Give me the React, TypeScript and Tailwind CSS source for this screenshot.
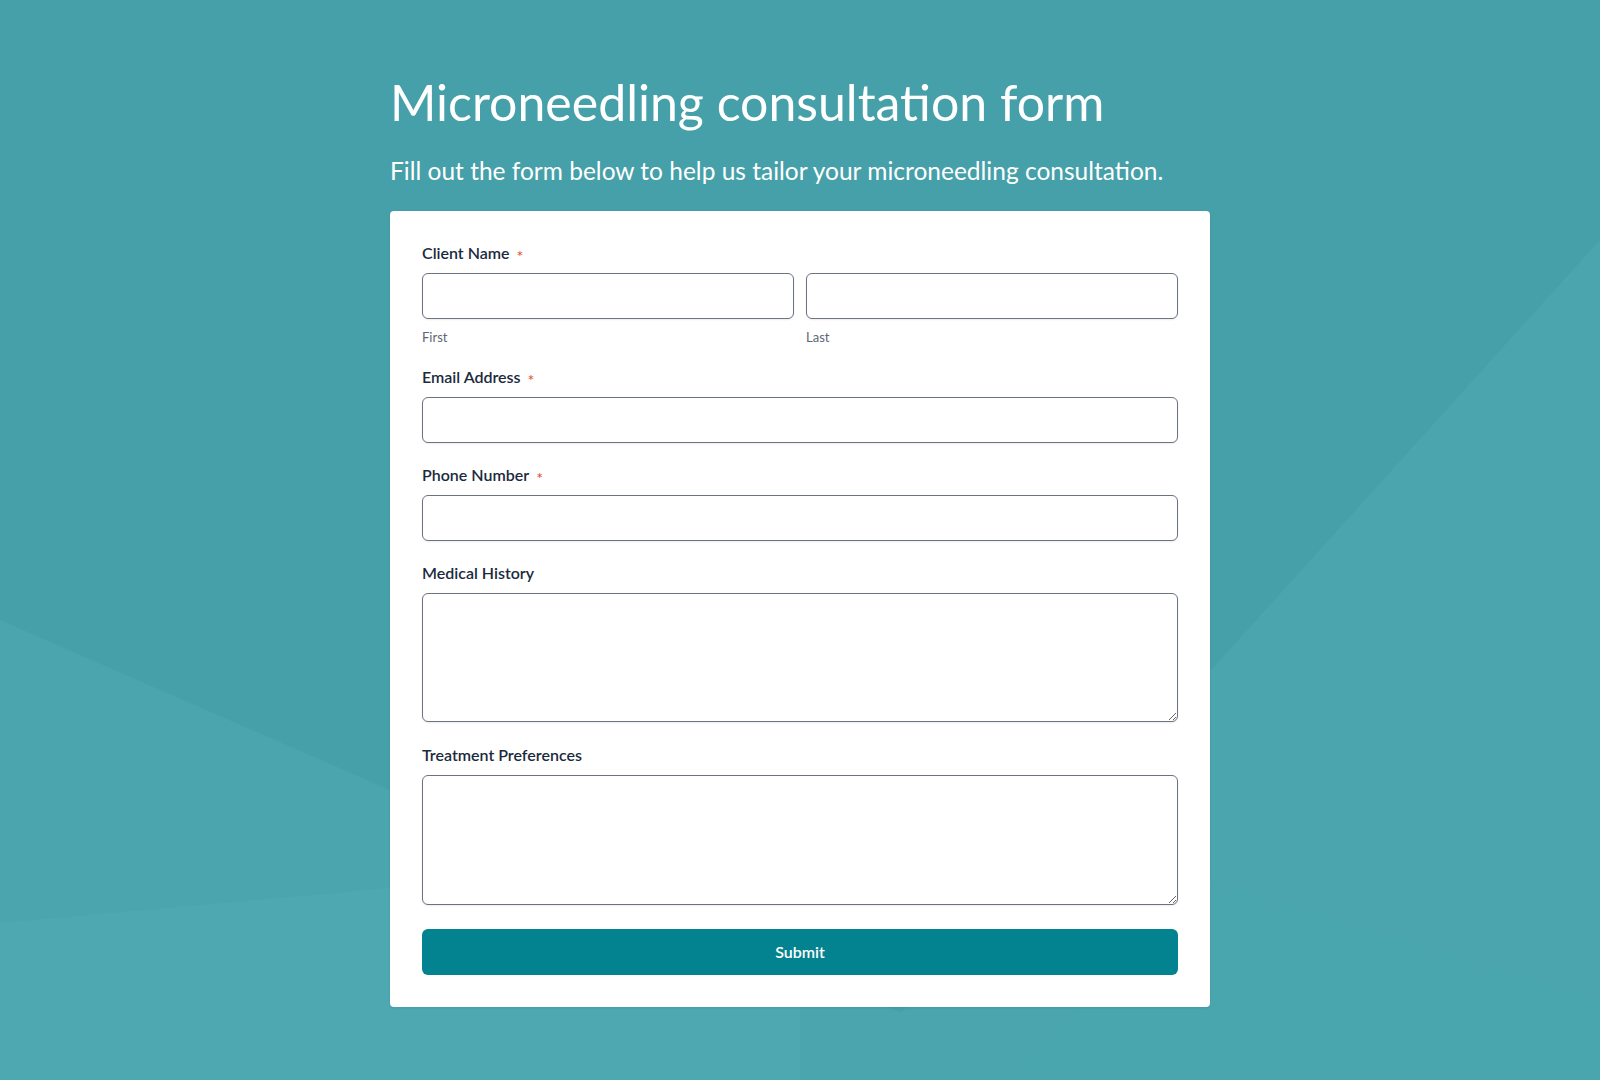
import React from 'react';

const Background = () => (
  <svg
    className="absolute inset-0 h-full w-full"
    viewBox="0 0 1600 1080"
    preserveAspectRatio="none"
    aria-hidden="true"
  >
    <rect width="1600" height="1080" fill="#46a0a9" />
    <polygon points="0,620 901,1013 1600,240 1600,1080 0,1080" fill="#4aa5ae" />
    <polygon points="0,923 390,888 800,1000 800,1080 0,1080" fill="#4da8b1" />
    <polygon points="1210,880 1600,1000 1600,1080 1000,1080" fill="#4da8b1" opacity="0.3" />
  </svg>
);

const Label = ({ text, required }: { text: string; required?: boolean }) => (
  <label className="mb-2.5 flex h-5 items-center text-base font-semibold leading-5 text-[#1b2a3d]">
    {text}
    {required && (
      <span className="relative top-[3px] ml-[7px] text-[16px] font-normal text-[#e0492f]">*</span>
    )}
  </label>
);

const inputCls =
  'block h-[46px] w-full rounded-md border border-[#6b7280] bg-white px-3 text-[15px] text-[#1b2a3d] shadow-[0_1px_2px_rgba(0,0,0,0.08)] outline-none';

const textareaCls =
  'block w-full rounded-md border border-[#6b7280] bg-white px-3 py-2 text-[15px] text-[#1b2a3d] shadow-[0_1px_2px_rgba(0,0,0,0.08)] outline-none';

export default function App() {
  return (
    <div className="relative min-h-screen w-full overflow-hidden font-['Lato','Noto_Sans',sans-serif]">
      <Background />
      <div className="relative mx-auto w-[820px] pt-[72px] pb-[73px]">
        <h1 className="text-[50px] leading-[60px] font-normal text-white">
          Microneedling consultation form
        </h1>
        <p className="mt-[23px] text-[24.5px] leading-8 font-normal text-white">
          Fill out the form below to help us tailor your microneedling consultation.
        </p>

        <form
          className="mt-6 rounded bg-white px-8 pt-8 pb-8 shadow-[0_1px_3px_rgba(0,0,0,0.08)]"
          onSubmit={(e) => e.preventDefault()}
        >
          <div className="mb-[22px]">
            <Label text="Client Name" required />
            <div className="grid grid-cols-2 gap-3">
              <div>
                <input type="text" className={inputCls} />
                <div className="mt-2.5 text-[13px] leading-4 text-[#5f6673]">First</div>
              </div>
              <div>
                <input type="text" className={inputCls} />
                <div className="mt-2.5 text-[13px] leading-4 text-[#5f6673]">Last</div>
              </div>
            </div>
          </div>

          <div className="mb-[22px]">
            <Label text="Email Address" required />
            <input type="email" className={inputCls} />
          </div>

          <div className="mb-[22px]">
            <Label text="Phone Number" required />
            <input type="tel" className={inputCls} />
          </div>

          <div className="mb-[23px]">
            <Label text="Medical History" />
            <textarea className={`${textareaCls} h-[129px]`} />
          </div>

          <div className="mb-6">
            <Label text="Treatment Preferences" />
            <textarea className={`${textareaCls} h-[130px]`} />
          </div>

          <button
            type="submit"
            className="flex h-[46px] w-full items-center justify-center rounded-md bg-[#02838f] text-base font-semibold text-white"
          >
            Submit
          </button>
        </form>
      </div>
    </div>
  );
}
